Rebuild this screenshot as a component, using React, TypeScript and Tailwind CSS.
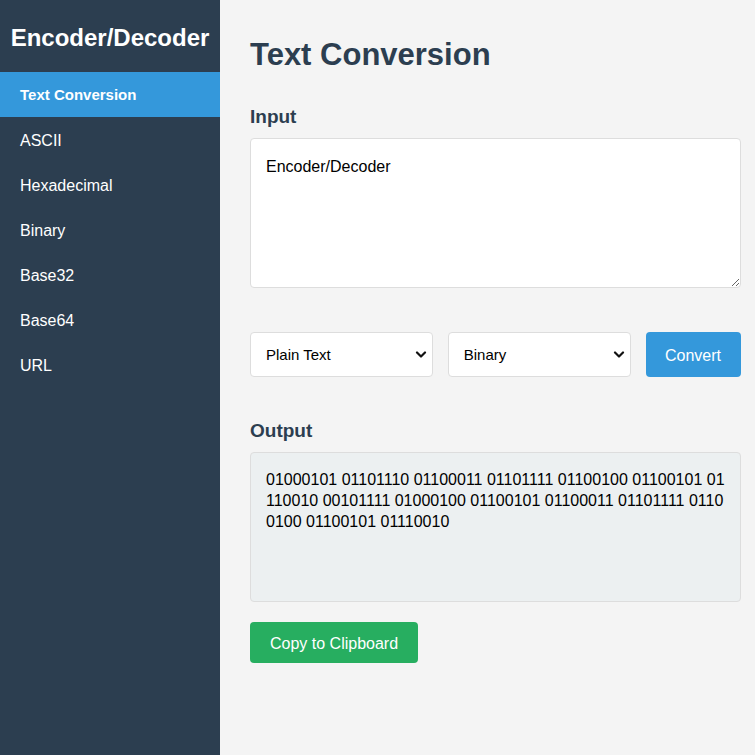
import React from "react";

const font = { fontFamily: '"Liberation Sans", Arial, sans-serif' };

function Chevron() {
  return (
    <svg
      className="pointer-events-none absolute right-[6px] top-1/2 -translate-y-1/2"
      width="12"
      height="8"
      viewBox="0 0 12 8"
      fill="none"
    >
      <polyline points="2,1.5 6,5.5 10,1.5" stroke="#111" strokeWidth="2.2" strokeLinecap="round" strokeLinejoin="round" />
    </svg>
  );
}

function Select({ value, options }: { value: string; options: string[] }) {
  return (
    <div className="relative flex-1">
      <select
        defaultValue={value}
        className="h-[45px] w-full appearance-none rounded-[4px] border border-[#dddddd] bg-white pl-[15px] pr-[30px] pt-[2px] text-[15px] text-black outline-none"
      >
        {options.map((o) => (
          <option key={o}>{o}</option>
        ))}
      </select>
      <Chevron />
    </div>
  );
}

export default function App() {
  const items = ["Text Conversion", "ASCII", "Hexadecimal", "Binary", "Base32", "Base64", "URL"];
  const opts = ["Plain Text", "ASCII", "Hexadecimal", "Binary", "Base32", "Base64", "URL"];
  return (
    <div className="flex min-h-screen w-full" style={font}>
      <aside className="w-[220px] shrink-0 bg-[#2c3e50] text-white">
        <div className="flex h-[72px] items-center justify-center pt-[4px] text-[24px] font-bold">Encoder/Decoder</div>
        <nav className="flex flex-col">
          {items.map((it, i) =>
            i === 0 ? (
              <div key={it} className="flex h-[45px] items-center bg-[#3498db] pl-[20px] pt-[2px] text-[15px] font-bold">
                {it}
              </div>
            ) : (
              <div key={it} className="flex h-[45px] items-center pl-[20px] pt-[2px] text-[16px]">
                {it}
              </div>
            )
          )}
        </nav>
      </aside>
      <main className="flex-1 bg-[#f4f4f4] pl-[30px] pr-[15px] pt-[35px]">
        <h1 className="text-[31px] font-bold leading-[40px] text-[#2c3e50]">Text Conversion</h1>
        <div className="mt-[30px] text-[19px] font-bold leading-[24px] text-[#2c3e50]">Input</div>
        <textarea
          defaultValue="Encoder/Decoder"
          className="mt-[9px] block h-[150px] w-full rounded-[4px] border border-[#dddddd] bg-white px-[15px] pb-[15px] pt-[17px] text-[16px] leading-[21px] text-black outline-none"
        />
        <div className="mt-[44px] flex gap-[15px]">
          <Select value="Plain Text" options={opts} />
          <Select value="Binary" options={opts} />
          <button className="h-[45px] w-[95px] rounded-[4px] bg-[#3498db] pt-[2px] text-[16px] text-white">Convert</button>
        </div>
        <div className="mt-[42px] text-[19px] font-bold leading-[24px] text-[#2c3e50]">Output</div>
        <div className="mt-[9px] h-[150px] w-full overflow-hidden whitespace-pre rounded-[4px] border border-[#dddddd] bg-[#ecf0f1] px-[15px] pb-[15px] pt-[16px] text-[16px] leading-[21px] text-black">
          {"01000101 01101110 01100011 01101111 01100100 01100101 01\n110010 00101111 01000100 01100101 01100011 01101111 0110\n0100 01100101 01110010"}
        </div>
        <button className="mt-[20px] h-[41px] rounded-[4px] bg-[#27ae60] px-[20px] pt-[2px] text-[16px] text-white">
          Copy to Clipboard
        </button>
      </main>
    </div>
  );
}
